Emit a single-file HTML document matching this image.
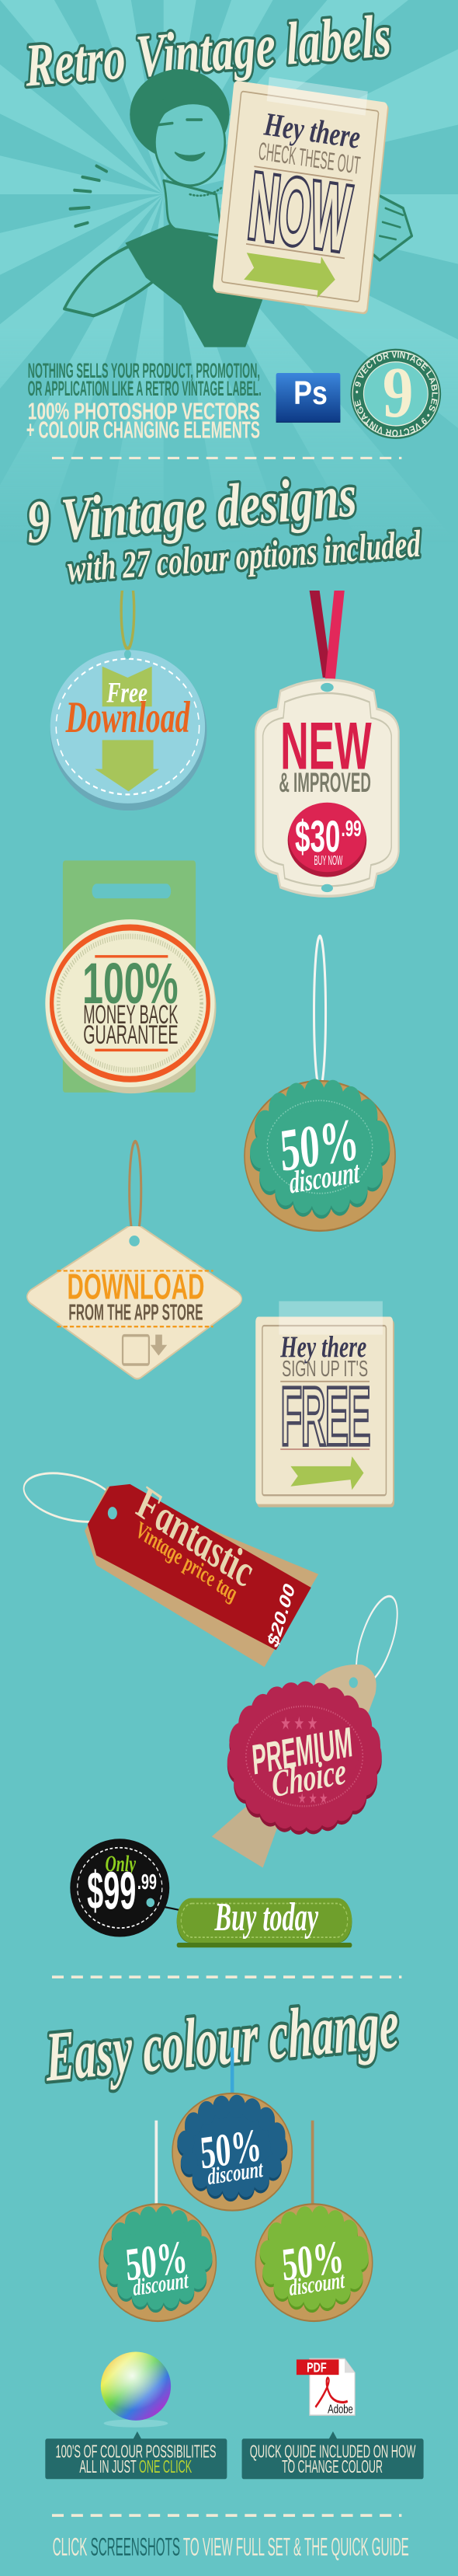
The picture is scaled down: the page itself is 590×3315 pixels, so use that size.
<!DOCTYPE html>
<html><head><meta charset="utf-8">
<style>
html,body{margin:0;padding:0}
body{width:590px;height:3315px;position:relative;overflow:hidden;background:#64c4c5}
svg{position:absolute;left:0;width:590px;overflow:hidden}
.scr{font-family:"Liberation Serif",serif;font-style:italic;font-weight:bold}
.ttl{fill:#f4f0dd;stroke:#2e6d5b;stroke-width:16;paint-order:stroke;stroke-linejoin:round}
.sans{font-family:"Liberation Sans",sans-serif}
</style></head><body>

<!-- SECTION 1 : 0-760 -->
<svg style="top:0;height:760px" viewBox="0 0 1568 1702" preserveAspectRatio="none">
<defs>
<linearGradient id="fade" x1="0" y1="0" x2="0" y2="1"><stop offset="0.6" stop-color="#fff"/><stop offset="1" stop-color="#000"/></linearGradient>
<mask id="m1"><rect x="0" y="0" width="1568" height="1568" fill="url(#fade)"/></mask>
<linearGradient id="ps" x1="0" y1="0" x2="0" y2="1"><stop offset="0" stop-color="#3b86dc"/><stop offset="1" stop-color="#0d3a86"/></linearGradient>
<path id="circ" d="M1355,1135 m-124,0 a124,104 0 1,1 248,0 a124,104 0 1,1 -248,0"/>
</defs>
<rect x="0" y="0" width="1568" height="1702" fill="#64c4c5"/>
<g fill="#7ad3d3" mask="url(#m1)">
<polygon points="560,560 3060,560 3012,1048"/><polygon points="560,560 2870,1518 2638,1949"/>
<polygon points="560,560 2328,2328 1949,2638"/><polygon points="560,560 1518,2870 1048,3012"/>
<polygon points="560,560 560,3060 72,3012"/><polygon points="560,560 -398,2870 -829,2638"/>
<polygon points="560,560 -1208,2328 -1518,1949"/><polygon points="560,560 -1750,1518 -1892,1048"/>
<polygon points="560,560 -1940,560 -1892,72"/><polygon points="560,560 -1750,-398 -1518,-829"/>
<polygon points="560,560 -1208,-1208 -829,-1518"/><polygon points="560,560 -398,-1750 72,-1892"/>
<polygon points="560,560 560,-1940 1048,-1892"/><polygon points="560,560 1518,-1750 1949,-1518"/>
<polygon points="560,560 2328,-1208 2638,-829"/><polygon points="560,560 2870,-398 3012,72"/>
</g>
<text class="scr ttl" x="85" y="205" font-size="175" textLength="1255" lengthAdjust="spacingAndGlyphs" transform="rotate(-4 700 150)">Retro Vintage labels</text>
<!-- woman -->
<g stroke="#2e8466" stroke-linejoin="round" stroke-linecap="round">
<path d="M220,890 C290,770 420,700 560,680 L720,610 L750,650 L640,720 C560,800 420,880 320,910 Z" fill="#6ccac6" stroke-width="9"/>
<path d="M430,700 L600,640 L770,700 L900,860 L840,1000 L700,1000 L620,880 L500,800 Z" fill="#2e8466"/>
<path d="M560,520 C580,600 560,640 600,660 L760,680 L740,560 Z" fill="#6ccac6" stroke-width="7"/>
<ellipse cx="615" cy="330" rx="170" ry="130" fill="#2e8466"/>
<ellipse cx="650" cy="410" rx="120" ry="125" fill="#6ccac6" stroke-width="7"/>
<path d="M540,300 C600,250 700,240 770,300 L760,330 C700,290 620,290 560,330 Z" fill="#2e8466"/>
<path d="M540,360 l50,-5 M640,345 l50,0" stroke-width="8" fill="none"/>
<path d="M600,440 C630,470 680,470 700,440 C680,450 630,455 600,440 Z" fill="#2e8466" stroke-width="5"/>
<path d="M650,560 C690,570 730,560 760,540" stroke-width="6" fill="none" stroke-dasharray="4 8"/>
<path d="M1290,560 L1380,600 L1410,680 L1300,750 L1260,720 Z" fill="#6ccac6" stroke-width="8"/>
<path d="M1320,600 l60,20 M1310,640 l60,15 M1300,680 l55,10" stroke-width="6" fill="none"/>
<path d="M330,478 l35,16 M282,510 l58,10 M255,548 l55,4 M240,602 l65,-4 M258,652 l42,-10" stroke-width="9" fill="none"/>
</g>
<g transform="rotate(7 1032 572)">
<rect x="767" y="267" width="530" height="610" rx="14" fill="#d4bf98"/>
<rect x="762" y="262" width="530" height="610" rx="14" fill="#efe6cc"/>
<rect x="790" y="290" width="474" height="554" rx="8" fill="none" stroke="#b9a482" stroke-width="4"/>
<rect x="880" y="238" width="340" height="70" fill="#ffffff" opacity="0.35"/>
<text class="scr" x="880" y="405" font-size="95" fill="#3b3a55" textLength="330" lengthAdjust="spacingAndGlyphs">Hey there</text>
<text class="sans" x="870" y="478" font-size="72" fill="#8a7c68" textLength="350" lengthAdjust="spacingAndGlyphs">CHECK THESE OUT</text>
<line x1="860" y1="500" x2="1200" y2="500" stroke="#b39a7c" stroke-width="4"/>
<text class="sans" x="858" y="705" font-size="270" font-weight="bold" fill="#efe6cc" stroke="#3b3a55" stroke-width="18" paint-order="stroke" textLength="345" lengthAdjust="spacingAndGlyphs">NOW</text>
<line x1="860" y1="725" x2="1200" y2="725" stroke="#b39a7c" stroke-width="4"/>
<polygon points="865,750 1120,750 1120,730 1175,790 1120,850 1120,828 865,828 895,790" fill="#a7c552"/>
</g>
<g class="sans" font-weight="bold">
<text x="95" y="1088" font-size="60" fill="#2e7f63" textLength="795" lengthAdjust="spacingAndGlyphs">NOTHING SELLS YOUR PRODUCT, PROMOTION,</text>
<text x="95" y="1140" font-size="60" fill="#2e7f63" textLength="800" lengthAdjust="spacingAndGlyphs">OR APPLICATION LIKE A RETRO VINTAGE LABEL.</text>
<text x="95" y="1208" font-size="68" fill="#f3ecd3" textLength="795" lengthAdjust="spacingAndGlyphs">100% PHOTOSHOP VECTORS</text>
<text x="90" y="1262" font-size="68" fill="#f3ecd3" textLength="800" lengthAdjust="spacingAndGlyphs">+ COLOUR CHANGING ELEMENTS</text>
</g>
<rect x="945" y="1180" width="220" height="38" fill="#0b2f6c"/>
<rect x="945" y="1075" width="220" height="140" rx="6" fill="url(#ps)"/>
<text class="sans" x="1005" y="1165" font-size="95" font-weight="bold" fill="#fff">Ps</text>
<ellipse cx="1355" cy="1135" rx="155" ry="130" fill="#2d7a5e"/>
<ellipse cx="1355" cy="1135" rx="148" ry="123" fill="none" stroke="#e8efe0" stroke-width="3"/>
<ellipse cx="1355" cy="1135" rx="110" ry="92" fill="#6fcfc8" stroke="#e8efe0" stroke-width="3"/>
<text class="sans" font-size="28" fill="#e8efe0" font-weight="bold"><textPath href="#circ">• 9 VECTOR VINTAGE LABLES • 9 VECTOR VINTAGE LABLES</textPath></text>
<text x="1310" y="1200" font-size="210" font-family="Liberation Serif,serif" font-weight="bold" fill="#f4efcf">9</text>
<line x1="178" y1="1320" x2="1375" y2="1320" stroke="#f0ead6" stroke-width="7" stroke-dasharray="40 26"/>
<text class="scr ttl" x="90" y="1525" font-size="175" textLength="1130" lengthAdjust="spacingAndGlyphs" transform="rotate(-4 650 1450)">9 Vintage designs</text>
<text class="scr ttl" x="230" y="1640" font-size="110" textLength="1210" lengthAdjust="spacingAndGlyphs" transform="rotate(-3.5 830 1600)">with 27 colour options included</text>
</svg>

<!-- SECTION 2 : 760-1600 (drawn with 700 origin) -->
<svg style="top:760px;height:840px" viewBox="0 105 1568 1463" preserveAspectRatio="none">
<ellipse cx="437" cy="150" rx="22" ry="85" fill="none" stroke="#a9ae4c" stroke-width="9"/>
<ellipse cx="440" cy="420" rx="268" ry="178" fill="#6aa9b8"/>
<ellipse cx="437" cy="410" rx="265" ry="172" fill="#93d3df"/>
<ellipse cx="437" cy="410" rx="245" ry="152" fill="none" stroke="#fff" stroke-width="4" stroke-dasharray="16 12"/>
<ellipse cx="437" cy="248" rx="12" ry="10" fill="#64c4c5"/>
<polygon points="350,275 437,300 520,275 520,365 350,365" fill="#a7c55a"/>
<text class="scr" x="365" y="355" font-size="65" fill="#fff" textLength="140" lengthAdjust="spacingAndGlyphs">Free</text>
<text class="scr" x="225" y="422" font-size="100" fill="#e8651f" textLength="425" lengthAdjust="spacingAndGlyphs">Download</text>
<polygon points="350,440 525,440 525,505 545,505 440,555 325,505 350,505" fill="#a7c55a"/>
<polygon points="1050,65 1085,62 1135,300 1105,300" fill="#a3163a"/>
<polygon points="1150,68 1185,70 1145,320 1110,320" fill="#e2285a"/>
<path d="M960,330 Q1120,280 1280,330 L1290,370 Q1360,380 1365,420 L1365,690 Q1360,730 1290,740 L1280,770 Q1120,810 960,770 L950,740 Q880,730 875,690 L875,420 Q880,380 950,370 Z" fill="#f2eddc" stroke="#d6d2bd" stroke-width="6"/>
<path d="M975,355 Q1120,315 1265,355 L1270,390 Q1335,398 1340,430 L1340,680 Q1335,712 1270,720 L1265,750 Q1120,785 975,750 L970,720 Q905,712 900,680 L900,430 Q905,398 970,390 Z" fill="none" stroke="#c9c6b0" stroke-width="4"/>
<ellipse cx="1120" cy="322" rx="22" ry="10" fill="#64c4c5"/>
<text class="sans" x="960" y="505" font-size="150" font-weight="bold" fill="#d8204a" textLength="312" lengthAdjust="spacingAndGlyphs">NEW</text>
<text class="sans" x="955" y="556" font-size="62" font-weight="bold" fill="#7a7b69" textLength="315" lengthAdjust="spacingAndGlyphs">&amp; IMPROVED</text>
<ellipse cx="1120" cy="665" rx="135" ry="82" fill="#b01a3c"/>
<ellipse cx="1120" cy="658" rx="132" ry="78" fill="#dc2452"/>
<text class="sans" x="1010" y="690" font-size="100" font-weight="bold" fill="#fff" textLength="155" lengthAdjust="spacingAndGlyphs">$30</text>
<text class="sans" x="1168" y="655" font-size="50" font-weight="bold" fill="#fff">.99</text>
<text class="sans" x="1075" y="720" font-size="30" fill="#fff" textLength="98" lengthAdjust="spacingAndGlyphs">BUY NOW</text>
<ellipse cx="1120" cy="772" rx="20" ry="9" fill="#64c4c5"/>
<rect x="215" y="710" width="455" height="520" rx="8" fill="#80c07a"/>
<rect x="315" y="762" width="270" height="33" rx="16" fill="#64c4c5"/>
<ellipse cx="448" cy="1040" rx="292" ry="192" fill="#cfc9a6"/>
<ellipse cx="445" cy="1030" rx="290" ry="188" fill="#efecce"/>
<ellipse cx="445" cy="1030" rx="268" ry="170" fill="none" stroke="#ef5a24" stroke-width="14"/>
<ellipse cx="445" cy="1030" rx="245" ry="150" fill="none" stroke="#c6c9a3" stroke-width="12" stroke-dasharray="3 5"/>
<line x1="325" y1="925" x2="575" y2="925" stroke="#ef5a24" stroke-width="6"/>
<line x1="325" y1="1135" x2="575" y2="1135" stroke="#ef5a24" stroke-width="6"/>
<text class="sans" x="282" y="1030" font-size="130" font-weight="bold" fill="#4f8f5f" textLength="328" lengthAdjust="spacingAndGlyphs">100%</text>
<text class="sans" x="285" y="1075" font-size="60" fill="#4b3b2e" textLength="325" lengthAdjust="spacingAndGlyphs">MONEY BACK</text>
<text class="sans" x="285" y="1120" font-size="60" fill="#4b3b2e" textLength="325" lengthAdjust="spacingAndGlyphs">GUARANTEE</text>
<ellipse cx="1095" cy="1050" rx="20" ry="170" fill="none" stroke="#f4f4f0" stroke-width="8"/>
<ellipse cx="1095" cy="1372" rx="258" ry="168" fill="#c49a5a" stroke="#a37a40" stroke-width="4"/>
<ellipse cx="1095" cy="1360" rx="205" ry="118" fill="#2f9277" stroke="#2f9277" stroke-width="70" stroke-dasharray="1 62" stroke-linecap="round"/>
<ellipse cx="1095" cy="1352" rx="205" ry="118" fill="#3ba98a" stroke="#3ba98a" stroke-width="70" stroke-dasharray="1 62" stroke-linecap="round"/>
<ellipse cx="1095" cy="1352" rx="180" ry="104" fill="none" stroke="#82cdb6" stroke-width="3" stroke-dasharray="4 5"/>
<text x="960" y="1392" font-family="Liberation Serif,serif" font-weight="bold" font-size="135" fill="#fff" textLength="270" lengthAdjust="spacingAndGlyphs" transform="rotate(-6 1095 1360)">50%</text>
<text class="scr" x="990" y="1445" font-size="70" fill="#fff" textLength="240" lengthAdjust="spacingAndGlyphs" transform="rotate(-6 1095 1420)">discount</text>
<ellipse cx="463" cy="1450" rx="20" ry="110" fill="none" stroke="#b08a58" stroke-width="8"/>
</svg>

<!-- SECTION 3 : 1600-2500 -->
<svg style="top:1578px;height:922px" viewBox="0 -38 1568 1606" preserveAspectRatio="none">
<path d="M440,-38 Q460,-45 480,-38 L815,110 Q840,125 815,140 L485,300 Q470,308 455,300 L105,135 Q80,120 105,105 Z" fill="#f2e6c8" stroke="#d7c6a0" stroke-width="4"/>
<ellipse cx="460" cy="-5" rx="18" ry="12" fill="#64c4c5"/>
<line x1="195" y1="62" x2="730" y2="62" stroke="#f39a1d" stroke-width="4" stroke-dasharray="14 8"/>
<line x1="195" y1="187" x2="730" y2="187" stroke="#f39a1d" stroke-width="4" stroke-dasharray="14 8"/>
<text class="sans" x="230" y="125" font-size="80" font-weight="bold" fill="#f39a1d" textLength="470" lengthAdjust="spacingAndGlyphs">DOWNLOAD</text>
<text class="sans" x="235" y="172" font-size="50" font-weight="bold" fill="#6b5a44" textLength="460" lengthAdjust="spacingAndGlyphs">FROM THE APP STORE</text>
<rect x="420" y="207" width="90" height="65" rx="5" fill="none" stroke="#bcab8b" stroke-width="6"/>
<polygon points="532,205 555,205 555,228 572,228 543,252 515,228 532,228" fill="#bcab8b"/>
<rect x="880" y="172" width="470" height="420" rx="10" fill="#cbb793"/>
<rect x="875" y="165" width="470" height="420" rx="10" fill="#efe6cc"/>
<rect x="898" y="185" width="424" height="380" rx="6" fill="none" stroke="#b9a78a" stroke-width="4"/>
<rect x="955" y="130" width="355" height="75" fill="#fff" opacity="0.3"/>
<text class="scr" x="960" y="255" font-size="68" fill="#3b3a55" textLength="295" lengthAdjust="spacingAndGlyphs">Hey there</text>
<text class="sans" x="965" y="298" font-size="50" fill="#7d7466" textLength="295" lengthAdjust="spacingAndGlyphs">SIGN UP IT'S</text>
<line x1="960" y1="310" x2="1265" y2="310" stroke="#b39a7c" stroke-width="3"/>
<text class="sans" x="962" y="448" font-size="175" fill="#efe6cc" stroke="#4a4960" stroke-width="16" paint-order="stroke" textLength="305" lengthAdjust="spacingAndGlyphs">FREE</text>
<line x1="960" y1="462" x2="1265" y2="462" stroke="#c08a7c" stroke-width="3"/>
<polygon points="995,500 1200,500 1205,478 1245,515 1205,553 1200,530 995,545 1020,522" fill="#a7c552"/>
<ellipse cx="240" cy="570" rx="160" ry="50" fill="none" stroke="#f4efe0" stroke-width="5" transform="rotate(8 240 570)"/>
<polygon points="290,645 368,545 1090,742 905,950 330,722" fill="#c9a878"/>
<polygon points="300,630 375,545 445,540 1065,772 945,912 330,700" fill="#a8111a"/>
<ellipse cx="385" cy="605" rx="16" ry="14" fill="#64c4c5"/>
<g transform="rotate(24 650 700)">
<text class="scr" x="440" y="690" font-size="110" fill="#e7d6b0" textLength="420" lengthAdjust="spacingAndGlyphs">Fantastic</text>
<text class="scr" x="460" y="735" font-size="55" fill="#f0a02b" textLength="370" lengthAdjust="spacingAndGlyphs">Vintage price tag</text>
</g>
<text class="sans" x="865" y="880" font-size="55" font-weight="bold" fill="#fff" textLength="150" lengthAdjust="spacingAndGlyphs" transform="rotate(-66 930 830)">$20.00</text>
<ellipse cx="1290" cy="890" rx="50" ry="110" fill="none" stroke="#f2f2ee" stroke-width="5" transform="rotate(30 1290 890)"/>
<path d="M1080,980 Q1150,940 1240,945 Q1300,960 1285,1010 L1200,1160 L1050,1100 Z" fill="#cdb893"/>
<ellipse cx="1210" cy="985" rx="15" ry="12" fill="#64c4c5"/>
<polygon points="725,1330 900,1230 960,1290 900,1400" fill="#c4b08c"/>
<ellipse cx="1042" cy="1158" rx="225" ry="128" fill="#8e1638" stroke="#8e1638" stroke-width="80" stroke-dasharray="2 48" stroke-linecap="round"/>
<ellipse cx="1042" cy="1150" rx="225" ry="128" fill="#b52550" stroke="#b52550" stroke-width="80" stroke-dasharray="2 48" stroke-linecap="round"/>
<ellipse cx="1042" cy="1150" rx="200" ry="112" fill="none" stroke="#d0587a" stroke-width="4" stroke-dasharray="3 5"/>
<text x="960" y="1090" font-size="40" fill="#d95a80">★ ★ ★</text>
<text x="1020" y="1255" font-size="32" fill="#d95a80">★ ★ ★</text>
<g transform="rotate(-7 1040 1160)">
<text class="sans" x="865" y="1170" font-size="95" font-weight="bold" fill="#f2e8d0" textLength="345" lengthAdjust="spacingAndGlyphs">PREMIUM</text>
<text class="scr" x="925" y="1228" font-size="85" fill="#f2e8d0" textLength="255" lengthAdjust="spacingAndGlyphs">Choice</text>
</g>
<path d="M515,1480 C560,1490 600,1490 640,1500" fill="none" stroke="#111" stroke-width="4"/>
<ellipse cx="410" cy="1445" rx="170" ry="110" fill="#111"/>
<ellipse cx="410" cy="1445" rx="145" ry="90" fill="none" stroke="#fff" stroke-width="3" stroke-dasharray="10 7"/>
<ellipse cx="515" cy="1478" rx="14" ry="10" fill="#64c4c5"/>
<text class="scr" x="360" y="1408" font-size="52" fill="#8ed01f" textLength="105" lengthAdjust="spacingAndGlyphs">Only</text>
<text class="sans" x="298" y="1492" font-size="120" font-weight="bold" fill="#fff" textLength="168" lengthAdjust="spacingAndGlyphs">$99</text>
<text class="sans" x="470" y="1448" font-size="48" font-weight="bold" fill="#fff">.99</text>
<rect x="605" y="1475" width="600" height="93" rx="46" fill="#4a7a1a"/>
<rect x="605" y="1468" width="600" height="100" rx="50" fill="#6f9f2c"/>
<rect x="620" y="1480" width="570" height="76" rx="38" fill="none" stroke="#a2c861" stroke-width="3" stroke-dasharray="8 6"/>
<text class="scr" x="735" y="1540" font-size="90" fill="#fff" textLength="355" lengthAdjust="spacingAndGlyphs">Buy today</text>
</svg>

<!-- SECTION 4 : 2500-3315 -->
<svg style="top:2500px;height:815px" viewBox="0 0 1568 1568" preserveAspectRatio="none">
<defs>
<linearGradient id="wheel" x1="0" y1="0" x2="1" y2="1"><stop offset="0" stop-color="#ff9a2a"/><stop offset="0.25" stop-color="#e8f04a"/><stop offset="0.45" stop-color="#5fd050"/><stop offset="0.65" stop-color="#3a78e0"/><stop offset="0.85" stop-color="#a03ad0"/><stop offset="1" stop-color="#e02a5a"/></linearGradient>
<radialGradient id="wh" cx="0.45" cy="0.35" r="0.5"><stop offset="0" stop-color="#fff" stop-opacity="0.9"/><stop offset="1" stop-color="#fff" stop-opacity="0"/></radialGradient>
</defs>
<rect x="605" y="0" width="600" height="12" rx="6" fill="#4a7a1a"/>
<line x1="178" y1="85" x2="1375" y2="85" stroke="#f0ead6" stroke-width="7" stroke-dasharray="40 26"/>
<text class="scr ttl" x="155" y="300" font-size="175" textLength="1210" lengthAdjust="spacingAndGlyphs" transform="rotate(-4 760 240)">Easy colour change</text>
<line x1="795" y1="260" x2="795" y2="385" stroke="#3aa7d8" stroke-width="12"/>
<ellipse cx="795" cy="518" rx="205" ry="145" fill="#c49a5a" stroke="#a37a40" stroke-width="4"/>
<ellipse cx="795" cy="512" rx="160" ry="100" fill="#154d6e" stroke="#154d6e" stroke-width="58" stroke-dasharray="1 52" stroke-linecap="round"/>
<ellipse cx="795" cy="505" rx="160" ry="100" fill="#1f6189" stroke="#1f6189" stroke-width="58" stroke-dasharray="1 52" stroke-linecap="round"/>
<text x="685" y="548" font-family="Liberation Serif,serif" font-weight="bold" font-size="115" fill="#fff" textLength="210" lengthAdjust="spacingAndGlyphs" transform="rotate(-6 795 510)">50%</text>
<text class="scr" x="710" y="590" font-size="58" fill="#fff" textLength="190" lengthAdjust="spacingAndGlyphs" transform="rotate(-6 795 570)">discount</text>
<line x1="535" y1="440" x2="535" y2="660" stroke="#f0f0ea" stroke-width="10"/>
<ellipse cx="540" cy="792" rx="200" ry="145" fill="#c49a5a" stroke="#a37a40" stroke-width="4"/>
<ellipse cx="540" cy="787" rx="158" ry="100" fill="#2c8c72" stroke="#2c8c72" stroke-width="58" stroke-dasharray="1 52" stroke-linecap="round"/>
<ellipse cx="540" cy="780" rx="158" ry="100" fill="#3aab8b" stroke="#3aab8b" stroke-width="58" stroke-dasharray="1 52" stroke-linecap="round"/>
<text x="430" y="825" font-family="Liberation Serif,serif" font-weight="bold" font-size="115" fill="#fff" textLength="212" lengthAdjust="spacingAndGlyphs" transform="rotate(-6 540 790)">50%</text>
<text class="scr" x="455" y="865" font-size="58" fill="#fff" textLength="190" lengthAdjust="spacingAndGlyphs" transform="rotate(-6 540 850)">discount</text>
<line x1="1070" y1="440" x2="1070" y2="660" stroke="#b08a58" stroke-width="10"/>
<ellipse cx="1075" cy="792" rx="200" ry="145" fill="#c49a5a" stroke="#a37a40" stroke-width="4"/>
<ellipse cx="1075" cy="787" rx="158" ry="100" fill="#5e9a22" stroke="#5e9a22" stroke-width="58" stroke-dasharray="1 52" stroke-linecap="round"/>
<ellipse cx="1075" cy="780" rx="158" ry="100" fill="#7cb83a" stroke="#7cb83a" stroke-width="58" stroke-dasharray="1 52" stroke-linecap="round"/>
<text x="965" y="825" font-family="Liberation Serif,serif" font-weight="bold" font-size="115" fill="#fff" textLength="212" lengthAdjust="spacingAndGlyphs" transform="rotate(-6 1075 790)">50%</text>
<text class="scr" x="990" y="865" font-size="58" fill="#fff" textLength="190" lengthAdjust="spacingAndGlyphs" transform="rotate(-6 1075 850)">discount</text>
<ellipse cx="465" cy="1190" rx="110" ry="10" fill="#8fd8d8" opacity="0.7"/>
<ellipse cx="465" cy="1098" rx="120" ry="85" fill="url(#wheel)"/>
<ellipse cx="465" cy="1098" rx="120" ry="85" fill="url(#wh)"/>
<path d="M1060,1030 L1180,1030 L1215,1065 L1215,1170 L1060,1170 Z" fill="#fff" stroke="#ccc" stroke-width="3"/>
<path d="M1180,1030 L1180,1065 L1215,1065 Z" fill="#ddd"/>
<rect x="1015" y="1032" width="145" height="38" fill="#d8141c"/>
<text class="sans" x="1050" y="1063" font-size="34" font-weight="bold" fill="#fff">PDF</text>
<path d="M1080,1150 C1110,1120 1130,1090 1125,1080 C1120,1070 1110,1090 1130,1120 C1145,1140 1180,1140 1190,1135" fill="none" stroke="#d8141c" stroke-width="6"/>
<text class="sans" x="1122" y="1165" font-size="30" fill="#111">Adobe</text>
<g class="sans">
<polygon points="455,1230 470,1210 485,1230" fill="#246b6b"/>
<rect x="155" y="1228" width="622" height="100" rx="6" fill="#246b6b"/>
<text x="190" y="1275" font-size="44" fill="#f0ead6" textLength="550" lengthAdjust="spacingAndGlyphs">100'S OF COLOUR POSSIBILITIES</text>
<text x="272" y="1312" font-size="44" fill="#f0ead6" textLength="385" lengthAdjust="spacingAndGlyphs">ALL IN JUST <tspan fill="#b8d432">ONE CLICK</tspan></text>
<polygon points="1125,1230 1140,1210 1155,1230" fill="#246b6b"/>
<rect x="828" y="1228" width="622" height="100" rx="6" fill="#246b6b"/>
<text x="855" y="1275" font-size="44" fill="#f0ead6" textLength="568" lengthAdjust="spacingAndGlyphs">QUICK QUIDE INCLUDED ON HOW</text>
<text x="965" y="1312" font-size="44" fill="#f0ead6" textLength="345" lengthAdjust="spacingAndGlyphs">TO CHANGE COLOUR</text>
</g>
<line x1="178" y1="1418" x2="1375" y2="1418" stroke="#f0ead6" stroke-width="7" stroke-dasharray="40 26"/>
<text class="sans" x="180" y="1517" font-size="62" fill="#f0ead6" textLength="1220" lengthAdjust="spacingAndGlyphs">CLICK <tspan fill="#1e6a6a">SCREENSHOTS</tspan> TO VIEW FULL SET &amp; THE QUICK GUIDE</text>
</svg>
</body></html>
